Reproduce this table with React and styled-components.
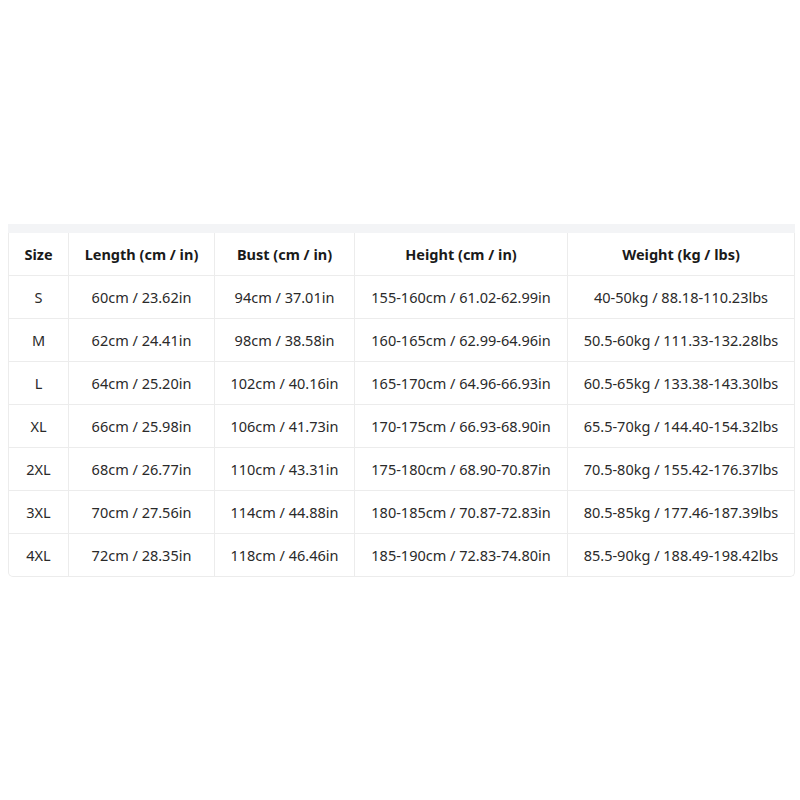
import React from 'react';
import styled, { createGlobalStyle } from 'styled-components';

const GlobalStyle = createGlobalStyle`
    html, body {
        margin: 0;
        padding: 0;
        background: #ffffff;
    }
    body {
        font-family: "Noto Sans", "Open Sans", Arial, sans-serif;
    }
`;

const Page = styled.div`
    min-height: 100vh;
    display: flex;
    flex-direction: column;
    justify-content: center;
    padding-left: 8px;
    box-sizing: border-box;
`;

const Wrapper = styled.div`
    width: 787px;
`;

const TopStrip = styled.div`
    height: 9px;
    background: #f3f4f6;
`;

const Table = styled.table`
    width: 100%;
    border-collapse: separate;
    border-spacing: 0;
    table-layout: fixed;
    border: 1px solid #ececec;
    border-top: none;
    border-radius: 0 0 5px 5px;
    overflow: hidden;
`;

const Th = styled.th`
    height: 42px;
    padding: 0;
    font-size: 14.5px;
    font-weight: 700;
    color: #1a1a1a;
    text-align: center;
    border-bottom: 1px solid #ececec;
    border-left: ${p => (p.first ? 'none' : '1px solid #ececec')};
`;

const Td = styled.td`
    height: 42px;
    padding: 0;
    font-size: 14.5px;
    color: #2a2a2a;
    text-align: center;
    white-space: nowrap;
    border-bottom: ${p => (p.last ? 'none' : '1px solid #ececec')};
    border-left: ${p => (p.first ? 'none' : '1px solid #ececec')};
`;

const columns = [
    { label: 'Size', width: 59 },
    { label: 'Length (cm / in)', width: 146 },
    { label: 'Bust (cm / in)', width: 140 },
    { label: 'Height (cm / in)', width: 213 },
    { label: 'Weight (kg / lbs)', width: 227 },
];

const rows = [
    ['S', '60cm / 23.62in', '94cm / 37.01in', '155-160cm / 61.02-62.99in', '40-50kg / 88.18-110.23lbs'],
    ['M', '62cm / 24.41in', '98cm / 38.58in', '160-165cm / 62.99-64.96in', '50.5-60kg / 111.33-132.28lbs'],
    ['L', '64cm / 25.20in', '102cm / 40.16in', '165-170cm / 64.96-66.93in', '60.5-65kg / 133.38-143.30lbs'],
    ['XL', '66cm / 25.98in', '106cm / 41.73in', '170-175cm / 66.93-68.90in', '65.5-70kg / 144.40-154.32lbs'],
    ['2XL', '68cm / 26.77in', '110cm / 43.31in', '175-180cm / 68.90-70.87in', '70.5-80kg / 155.42-176.37lbs'],
    ['3XL', '70cm / 27.56in', '114cm / 44.88in', '180-185cm / 70.87-72.83in', '80.5-85kg / 177.46-187.39lbs'],
    ['4XL', '72cm / 28.35in', '118cm / 46.46in', '185-190cm / 72.83-74.80in', '85.5-90kg / 188.49-198.42lbs'],
];

const App = () => {
    return (
        <>
            <GlobalStyle />
            <Page>
                <Wrapper>
                    <TopStrip />
                    <Table>
                        <colgroup>
                            {columns.map(c => (
                                <col key={c.label} style={{ width: c.width }} />
                            ))}
                        </colgroup>
                        <thead>
                            <tr>
                                {columns.map((c, i) => (
                                    <Th key={c.label} first={i === 0}>{c.label}</Th>
                                ))}
                            </tr>
                        </thead>
                        <tbody>
                            {rows.map((r, ri) => (
                                <tr key={r[0]}>
                                    {r.map((cell, ci) => (
                                        <Td key={ci} first={ci === 0} last={ri === rows.length - 1}>
                                            {cell}
                                        </Td>
                                    ))}
                                </tr>
                            ))}
                        </tbody>
                    </Table>
                </Wrapper>
            </Page>
        </>
    );
};

export default App;
